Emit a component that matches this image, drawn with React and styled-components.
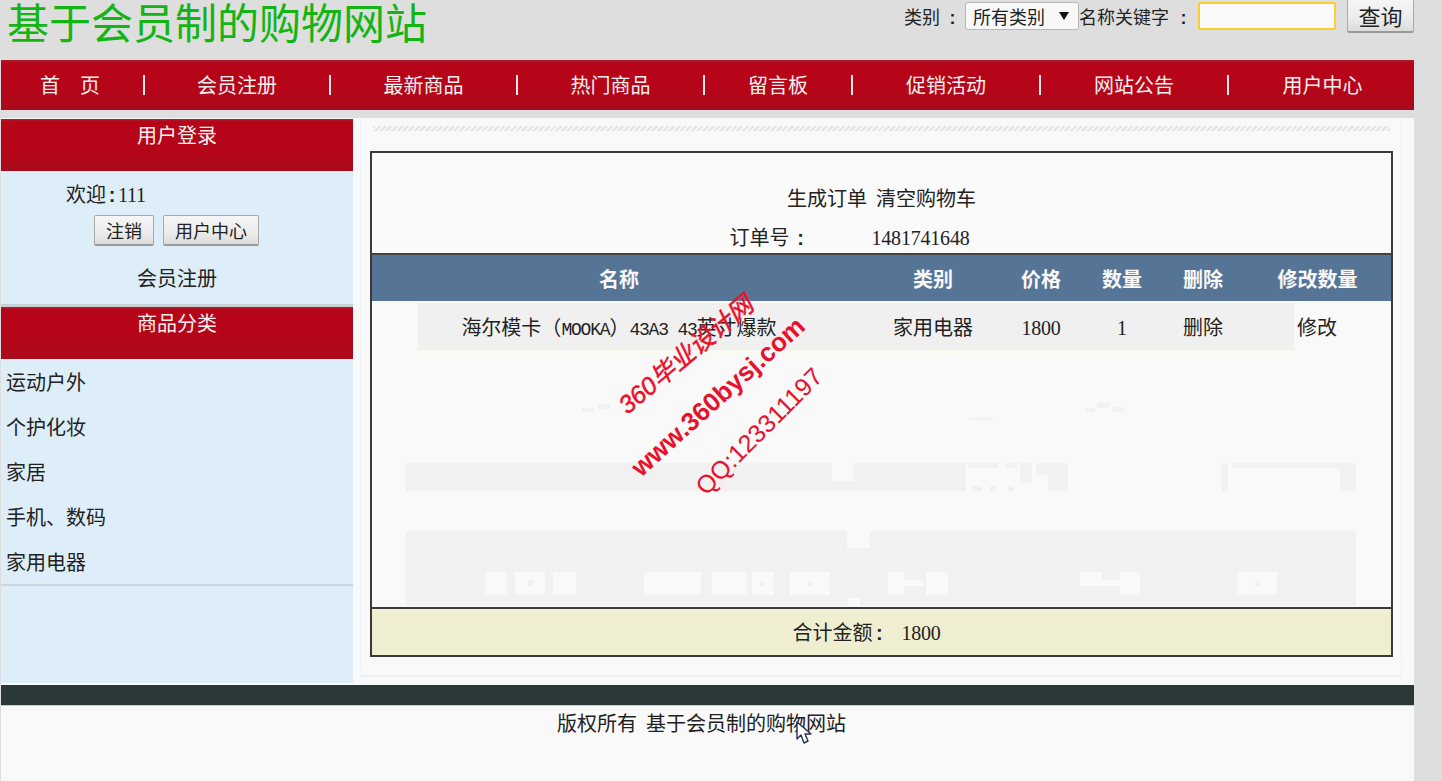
import React from "react";
import styled, { createGlobalStyle } from "styled-components";

const Global = createGlobalStyle`
  html, body { margin: 0; padding: 0; background: #dedede; overflow: hidden; }
  body { font-family: "Noto Sans CJK SC", "Liberation Sans", sans-serif; color: #222; }
  * { box-sizing: border-box; }
`;

const redBand = `
  background: linear-gradient(180deg, #a6202c 0, #b60518 3px, #b60518 60%, #a90a1c 100%);
  color: #f6f0f0;
`;

const Page = styled.div`
  position: relative;
  width: 1413px;
  height: 781px;
  margin-left: 1px;
  display: flex;
  flex-direction: column;
`;

const Header = styled.header`
  height: 60px;
  display: flex;
  justify-content: space-between;
  align-items: flex-start;
`;
const Title = styled.h1`
  margin: 0 0 0 6px;
  font-size: 42px;
  line-height: 42px;
  font-weight: 400;
  color: #14b414;
`;
const Search = styled.form`
  display: flex;
  align-items: flex-start;
  font-size: 18px;
  line-height: 32px;
  margin: 0;
`;
const Colon = styled.span`
  display: inline-block;
  width: ${(p) => p.$w}px;
  text-align: center;
  font-family: "Liberation Sans", sans-serif;
  font-weight: 700;
`;
const SelectBox = styled.div`
  width: 114px;
  height: 28px;
  margin-top: 2px;
  padding: 0 9px 0 7px;
  display: flex;
  align-items: center;
  justify-content: space-between;
  background: #f8f8f8;
  border: 1px solid #b8b8b8;
  border-radius: 3px;
  font-size: 18px;
`;
const KeywordInput = styled.input`
  width: 138px;
  height: 28px;
  margin-top: 2px;
  background: #fafafa;
  border: 2px solid #f8cf2c;
  border-radius: 2px;
  outline: none;
`;
const Btn = styled.button`
  font-family: inherit;
  font-size: ${(p) => p.$fs || 18}px;
  color: #222;
  padding: 0;
  width: ${(p) => p.$w}px;
  height: ${(p) => p.$h}px;
  background: linear-gradient(180deg, #f6f6f6 0%, #ececec 60%, #dcdcdc 100%);
  border: 1px solid #a9a9a9;
  border-bottom: 2px solid #999;
  border-radius: 2px;
  line-height: 1;
`;
const SearchBtn = styled(Btn)`
  margin: -2px 0 0 11px;
`;

const Nav = styled.nav`
  height: 50px;
  display: flex;
  align-items: center;
  font-size: 20px;
  ${redBand}
`;
const NavItem = styled.a`
  width: ${(p) => p.$w}px;
  padding-right: ${(p) => p.$pr || 0}px;
  padding-left: ${(p) => p.$pl || 0}px;
  text-align: center;
  white-space: pre;
  line-height: 50px;
`;
const NavSep = styled.i`
  width: 2px;
  height: 20px;
  margin: 0 -1px;
  background: #f3e6e6;
`;

const Body = styled.div`
  margin-top: 8px;
  height: 567px;
  display: flex;
  background: #f9f9f9;
`;
const Sidebar = styled.aside`
  width: 352px;
  height: 564px;
  margin-top: 1px;
  background: #ddeef8;
  display: flex;
  flex-direction: column;
`;
const SideHead = styled.h2`
  margin: 0;
  height: 52px;
  flex: none;
  font-size: 20px;
  font-weight: 400;
  line-height: 32px;
  text-align: center;
  ${redBand}
`;
const LoginBox = styled.div`
  height: 136px;
  border-bottom: 3px solid #c9d0d4;
  flex: none;
  padding-top: 10px;
  font-size: 20px;
`;
const Welcome = styled.div`
  padding-left: 65px;
  line-height: 26px;
  font-size: 20px;
`;
const Num = styled.span`
  font-family: "Liberation Serif", serif;
  font-size: 20px;
  letter-spacing: -0.2px;
  margin-left: ${(p) => p.$ml || 0}px;
`;
const Latin = styled.span`
  font-family: "Liberation Mono", monospace;
  font-size: 18px;
  letter-spacing: -1.2px;
`;
const LoginBtns = styled.div`
  display: flex;
  gap: 9px;
  padding-left: 93px;
  margin-top: 7px;
`;
const RegLink = styled.div`
  text-align: center;
  margin-top: 18px;
  line-height: 28px;
`;
const CatList = styled.ul`
  list-style: none;
  margin: 0;
  padding: 0 0 0 5px;
  border-bottom: 2px solid #cfd6da;
  font-size: 20px;
`;
const CatItem = styled.li`
  height: 45px;
  line-height: 45px;
`;

const Panel = styled.main`
  width: 1042px;
  margin-left: 7px;
  display: flex;
  flex-direction: column;
`;
const PanelInner = styled.div`
  height: 545px;
  border-left: 1px solid #eef1f1;
  border-right: 1px solid #eef1f1;
  padding: 8px 0 0 9px;
`;
const Hatch = styled.div`
  height: 5px;
  width: 1017px;
  margin-left: 3px;
  background: repeating-linear-gradient(135deg, #e4e4e4 0 2px, #f6f6f6 2px 4px);
`;
const PanelFoot = styled.div`
  height: 10px;
  margin-top: 4px;
  border: 1px solid #eef1f1;
  border-top: 0;
  border-bottom-width: 2px;
`;

const Cart = styled.section`
  margin-top: 20px;
  width: 1023px;
  height: 506px;
  border: 2px solid #3a3a3a;
  display: flex;
  flex-direction: column;
  background: #f9f9f9;
  font-size: 20px;
`;
const CartTop = styled.div`
  height: 102px;
  flex: none;
  padding-top: 33px;
  border-bottom: 2px solid #444;
  text-align: center;
  background: #fafafa;
`;
const TopLine = styled.div`
  line-height: 24px;
  white-space: pre;
  margin-bottom: 15px;
  padding-right: ${(p) => p.$pr || 0}px;
`;
const gridCols = "494px 134px 82px 80px 82px 147px";
const HeadRow = styled.div`
  height: 46px;
  flex: none;
  display: grid;
  grid-template-columns: ${gridCols};
  background: #567596;
  color: #f8f8f8;
  font-weight: 700;
  line-height: 47px;
  text-align: center;
`;
const ItemRow = styled.div`
  margin-top: 2px;
  height: 50px;
  flex: none;
  padding-left: 46px;
  display: flex;
  align-items: flex-start;
`;
const ItemBand = styled.div`
  width: 876px;
  height: 50px;
  display: grid;
  grid-template-columns: 448px 134px 82px 80px 82px 50px;
  background: #f0f0f0;
  border-bottom: 3px solid #fafaf2;
  line-height: 47px;
  text-align: center;
`;
const NameCell = styled.div`
  padding-right: 46px;
  white-space: nowrap;
`;
const EditCell = styled.div`
  padding-left: 3px;
  line-height: 47px;
`;
const Ghost = styled.svg`
  display: block;
  flex: none;
`;
const TotalRow = styled.div`
  height: 48px;
  flex: none;
  border-top: 2px solid #3a3a3a;
  background: #efeed0;
  line-height: 46px;
  text-align: center;
  padding-right: 30px;
  white-space: pre;
`;

const Footer = styled.footer`
  flex: 1;
  background: #f9f9f9;
  text-align: center;
`;
const FootBar = styled.div`
  height: 21px;
  background: #2b3838;
  border-bottom: 1px solid #c5cccc;
`;
const Copyright = styled.div`
  font-size: 20px;
  line-height: 28px;
  margin-top: 3px;
  padding-right: 12px;
  white-space: pre;
`;

const Watermark = styled.div`
  position: absolute;
  left: ${(p) => p.$x}px;
  top: ${(p) => p.$y}px;
  transform: rotate(${(p) => p.$r}deg);
  transform-origin: left center;
  color: #e9102a;
  font-family: "Liberation Sans", "Noto Sans CJK SC", sans-serif;
  font-size: ${(p) => p.$fs}px;
  font-weight: ${(p) => p.$fw || 400};
  font-style: ${(p) => (p.$it ? "italic" : "normal")};
  -webkit-text-stroke: ${(p) => p.$stroke || 0}px #e9102a;
  line-height: 1;
  white-space: nowrap;
`;
const CursorMark = styled.svg`
  position: absolute;
  left: 794px;
  top: 720px;
`;

const nav = [
  ["首　页", 143, 5, 0], ["会员注册", 186], ["最新商品", 187], ["热门商品", 187],
  ["留言板", 148], ["促销活动", 188], ["网站公告", 188], ["用户中心", 186, 0, 3],
];
const cats = ["运动户外", "个护化妆", "家居", "手机、数码", "家用电器"];
const heads = ["名称", "类别", "价格", "数量", "删除", "修改数量"];

export default function App() {
  return (
    <Page>
      <Global />
      <Header>
        <Title>基于会员制的购物网站</Title>
        <Search onSubmit={(e) => e.preventDefault()}>
          <span>类别<Colon $w={25}>:</Colon></span>
          <SelectBox>
            所有类别
            <svg width="10" height="8" viewBox="0 0 10 8"><path d="M0 0h10L5 8z" fill="#111" /></svg>
          </SelectBox>
          <span>名称关键字<Colon $w={29}>:</Colon></span>
          <KeywordInput />
          <SearchBtn $w={67} $h={35} $fs={22} type="button">查询</SearchBtn>
        </Search>
      </Header>

      <Nav>
        {nav.map(([t, w, pr, pl], i) => (
          <React.Fragment key={t}>
            {i > 0 && <NavSep />}
            <NavItem $w={w} $pr={pr} $pl={pl}>{t}</NavItem>
          </React.Fragment>
        ))}
      </Nav>

      <Body>
        <Sidebar>
          <SideHead>用户登录</SideHead>
          <LoginBox>
            <Welcome>欢迎<Colon $w={12}>:</Colon><Num>111</Num></Welcome>
            <LoginBtns>
              <Btn $w={60} $h={31} type="button">注销</Btn>
              <Btn $w={96} $h={31} type="button">用户中心</Btn>
            </LoginBtns>
            <RegLink>会员注册</RegLink>
          </LoginBox>
          <SideHead>商品分类</SideHead>
          <CatList>
            {cats.map((c) => <CatItem key={c}>{c}</CatItem>)}
          </CatList>
        </Sidebar>

        <Panel>
          <PanelInner>
            <Hatch />
            <Cart>
              <CartTop>
                <TopLine>生成订单  清空购物车</TopLine>
                <TopLine $pr={64}>订单号<Colon $w={22}>:</Colon><Num $ml={60}>1481741648</Num></TopLine>
              </CartTop>
              <HeadRow>
                {heads.map((h) => <div key={h}>{h}</div>)}
              </HeadRow>
              <ItemRow>
                <ItemBand>
                  <NameCell>海尔模卡（<Latin>MOOKA</Latin>）<Latin>43A3 43</Latin>英寸爆款</NameCell>
                  <div>家用电器</div>
                  <div><Num>1800</Num></div>
                  <div><Num>1</Num></div>
                  <div>删除</div>
                  <div />
                </ItemBand>
                <EditCell>修改</EditCell>
              </ItemRow>
              <Ghost width="1019" height="254" viewBox="372 353 1019 254">
                <g fill="#f1f1f1">
                  <rect x="582" y="408" width="12" height="4" />
                  <rect x="598" y="404" width="12" height="5" />
                  <rect x="970" y="418" width="24" height="2" />
                  <rect x="1085" y="408" width="10" height="4" />
                  <rect x="1097" y="403" width="12" height="5" />
                  <rect x="1112" y="407" width="12" height="5" />
                  <rect x="406" y="463" width="560" height="28" />
                  <rect x="968" y="463" width="30" height="5" />
                  <rect x="1005" y="463" width="12" height="5" />
                  <rect x="972" y="486" width="10" height="5" />
                  <rect x="990" y="486" width="6" height="5" />
                  <rect x="1008" y="486" width="6" height="5" />
                  <rect x="1020" y="463" width="12" height="20" />
                  <rect x="1036" y="463" width="12" height="12" />
                  <rect x="1048" y="463" width="20" height="28" />
                  <rect x="1222" y="463" width="6" height="28" />
                  <rect x="1232" y="463" width="110" height="5" />
                  <rect x="1340" y="463" width="16" height="28" />
                  <rect x="406" y="531" width="950" height="75" />
                </g>
                <g fill="#f9f9f9">
                  <rect x="832" y="463" width="22" height="18" />
                  <rect x="847" y="531" width="23" height="17" />
                  <rect x="485" y="572" width="22" height="23" />
                  <rect x="515" y="572" width="30" height="23" />
                  <rect x="553" y="572" width="23" height="23" />
                  <rect x="644" y="572" width="57" height="23" />
                  <rect x="712" y="572" width="35" height="23" />
                  <rect x="752" y="572" width="22" height="23" />
                  <rect x="790" y="572" width="40" height="23" />
                  <rect x="848" y="598" width="12" height="8" />
                  <rect x="888" y="572" width="16" height="23" />
                  <rect x="904" y="580" width="20" height="6" />
                  <rect x="926" y="572" width="22" height="23" />
                  <rect x="1080" y="572" width="22" height="14" />
                  <rect x="1100" y="580" width="22" height="6" />
                  <rect x="1120" y="572" width="20" height="23" />
                  <rect x="1237" y="572" width="40" height="23" />
                </g>
                <g fill="#f1f1f1">
                  <rect x="1255" y="581" width="5" height="5" />
                  <rect x="528" y="580" width="5" height="6" />
                  <rect x="760" y="581" width="5" height="5" />
                  <rect x="808" y="581" width="5" height="5" />
                </g>
              </Ghost>
              <TotalRow>合计金额<Colon $w={14}>:</Colon><Num $ml={15}>1800</Num></TotalRow>
            </Cart>
          </PanelInner>
          <PanelFoot />
        </Panel>
      </Body>

      <Footer>
        <FootBar />
        <Copyright>版权所有  基于会员制的购物网站</Copyright>
      </Footer>

      <Watermark $x={621} $y={396} $r={-40} $fs={25} $it $stroke={0.5}>360毕业设计网</Watermark>
      <Watermark $x={634} $y={458} $r={-42} $fs={26} $fw={700}>www.360bysj.com</Watermark>
      <Watermark $x={699} $y={478} $r={-45} $fs={25}>QQ:123311197</Watermark>
      <CursorMark width="18" height="26" viewBox="0 0 18 26">
        <path d="M2 2v17l4-4 3 8 4-2-3-7h6z" fill="#fff" stroke="#2a3050" strokeWidth="1.4" strokeLinejoin="round" />
      </CursorMark>
    </Page>
  );
}
